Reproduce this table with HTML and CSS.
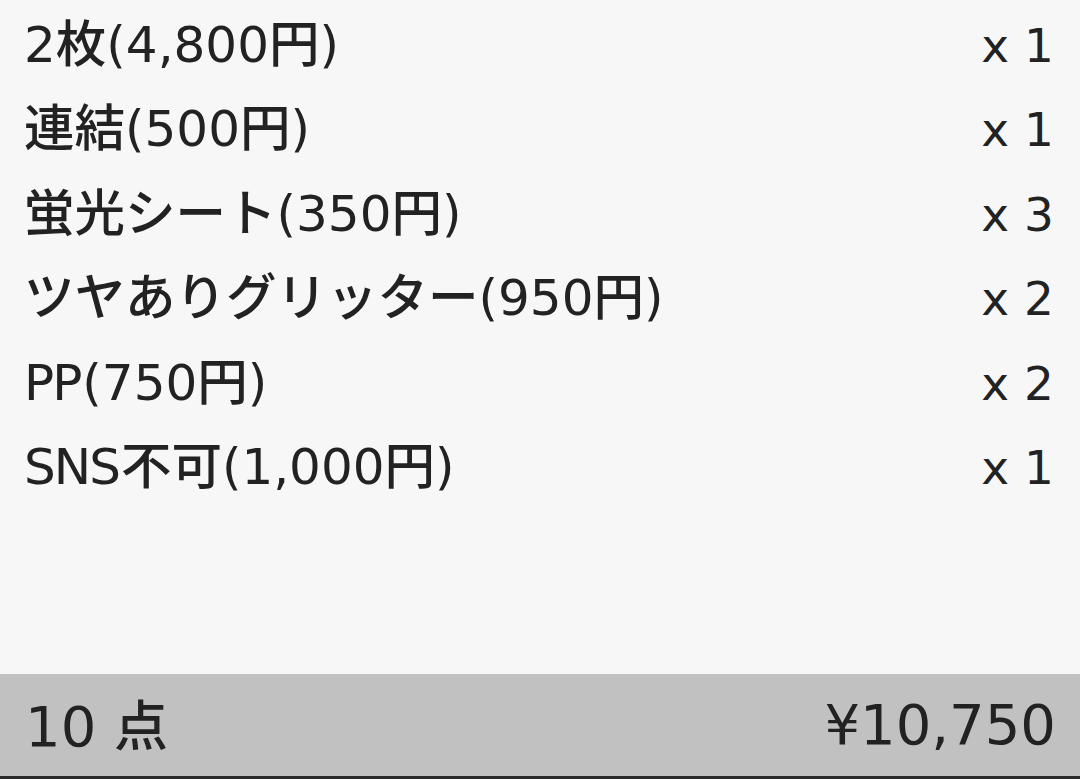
FILE: index.html
```html
<!DOCTYPE html>
<html lang="ja">
<head>
<meta charset="utf-8">
<link rel="stylesheet" href="styles.css">
</head>
<body>
<div class="screen">
  <ul class="items">
    <li class="item"><span class="name"><span class="lat">2</span>枚<span class="lat">(4,800</span>円<span class="lat">)</span></span><span class="qty lat">x 1</span></li>
    <li class="item"><span class="name">連結<span class="lat">(500</span>円<span class="lat">)</span></span><span class="qty lat">x 1</span></li>
    <li class="item"><span class="name">蛍光シート<span class="lat">(350</span>円<span class="lat">)</span></span><span class="qty lat">x 3</span></li>
    <li class="item"><span class="name">ツヤありグリッター<span class="lat">(950</span>円<span class="lat">)</span></span><span class="qty lat">x 2</span></li>
    <li class="item"><span class="name"><span class="lat caps">PP</span><span class="lat">(750</span>円<span class="lat">)</span></span><span class="qty lat">x 2</span></li>
    <li class="item"><span class="name"><span class="lat caps">SNS</span>不可<span class="lat">(1,000</span>円<span class="lat">)</span></span><span class="qty lat">x 1</span></li>
  </ul>
  <div class="total">
    <span class="count"><span class="lat">10 </span>点</span>
    <span class="price lat">¥10,750</span>
  </div>
</div>
</body>
</html>
```

FILE: styles.css
```css
html, body {
  margin: 0;
  padding: 0;
}
body {
  background: #f7f7f7;
  font-family: "Noto Sans CJK JP", "Noto Sans", sans-serif;
  color: #222;
}
.screen {
  width: 1080px;
  height: 779px;
  display: flex;
  flex-direction: column;
  overflow: hidden;
}
.items {
  list-style: none;
  margin: 0;
  padding: 0 26px 0 24px;
  flex: 1;
}
.item {
  display: flex;
  justify-content: space-between;
  align-items: baseline;
  height: 84.4px;
  font-size: 50.5px;
  line-height: 80px;
  font-weight: 500;
}
.lat {
  font-family: "DejaVu Sans", sans-serif;
  font-size: 50px;
  font-weight: 400;
}
.caps {
  letter-spacing: -2px;
  margin-right: 2px;
}
.qty {
  font-size: 47px;
}
.total {
  height: 102px;
  background: #c1c1c1;
  border-bottom: 3px solid #2a2a2a;
  display: flex;
  justify-content: space-between;
  align-items: center;
  padding: 0 24px 0 25px;
  font-size: 54px;
  font-weight: 500;
  line-height: 1;
}
.total .lat {
  font-size: 56px;
}
```
